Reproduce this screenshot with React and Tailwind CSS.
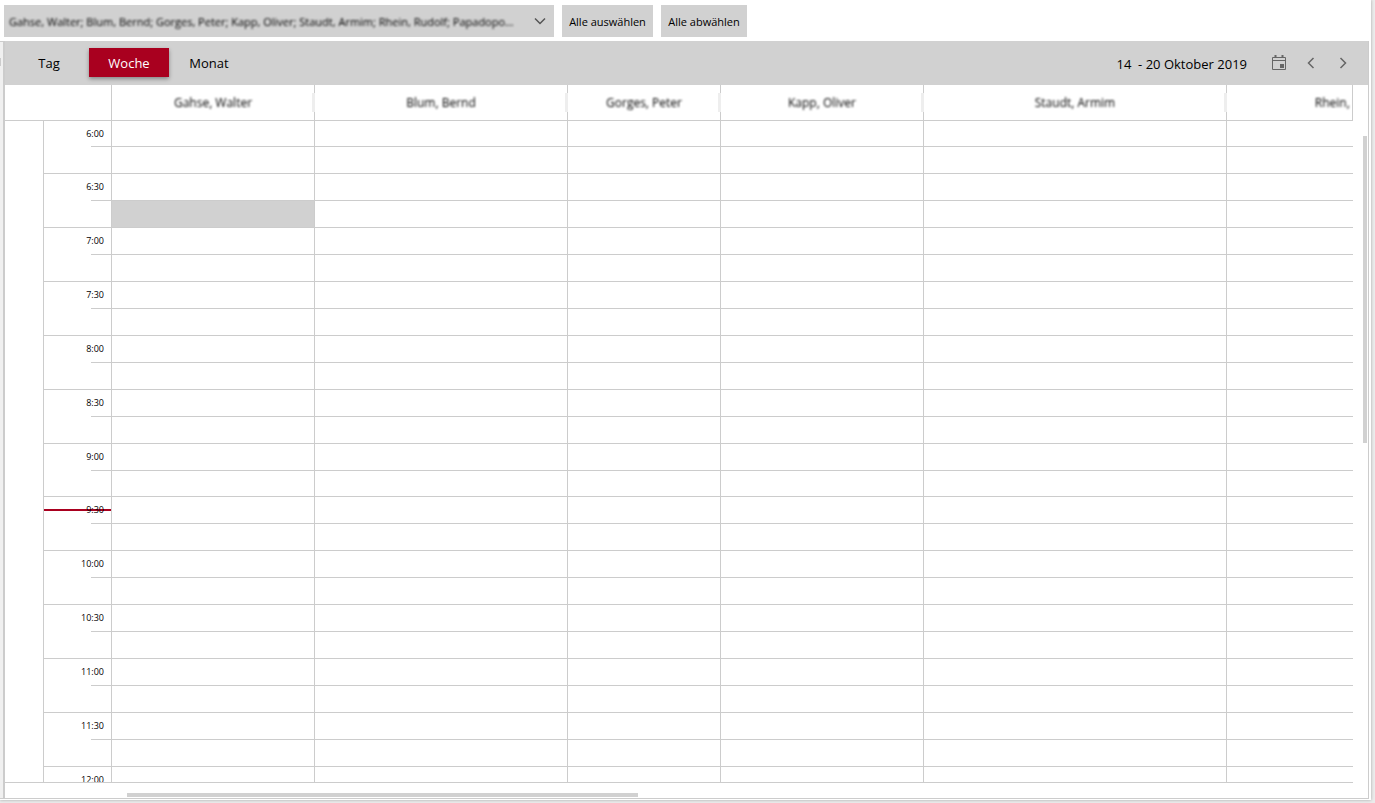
import { useState } from 'react'
import clsx from 'clsx'

const RESOURCES = ['Gahse, Walter', 'Blum, Bernd', 'Gorges, Peter', 'Kapp, Oliver', 'Staudt, Armim', 'Rhein, Rudolf']
const SELECTION = 'Gahse, Walter; Blum, Bernd; Gorges, Peter; Kapp, Oliver; Staudt, Armim; Rhein, Rudolf; Papadopoulos, Nikos'
const VIEWS = ['Tag', 'Woche', 'Monat']

// quarter-hour slots, labelled on every half hour
const SLOTS = [
  '6:00', '', '6:30', '', '7:00', '', '7:30', '', '8:00', '', '8:30', '', '9:00', '',
  '9:30', '', '10:00', '', '10:30', '', '11:00', '', '11:30', '', '12:00',
]
const NOW_SLOT = 14

// slots are slightly under 27px high, so every 13th one is a pixel shorter
const slotHeight = (row) => (row % 13 === 0 ? 'h-[26px]' : 'h-[27px]')

const Chevron = ({ d, className }) => (
  <svg viewBox="0 0 12 12" className={className} fill="none" stroke="currentColor" strokeWidth="1.5">
    <path d={d} />
  </svg>
)

const CalendarIcon = () => (
  <svg viewBox="0 0 16 16" className="h-4 w-4" fill="none" stroke="currentColor">
    <path d="M1.5 2.5h13v12h-13zM1.5 5.5h13" />
    <path d="M4.5 0v3M11.5 0v3" strokeWidth="2" />
    <path d="M9 9h4v4H9z" fill="currentColor" stroke="none" />
  </svg>
)

const FilterBar = () => (
  <div className="flex gap-2 px-1 pt-[5px] pb-1 text-[11px] text-black">
    <div className="relative h-8 w-[550px] bg-[#d1d1d1]">
      <select
        aria-label="Mitarbeiter"
        className="h-full w-full appearance-none overflow-hidden pt-0.5 pr-9 pl-[5px] text-ellipsis whitespace-nowrap blur-[1px] outline-none"
      >
        <option>{SELECTION}</option>
      </select>
      <Chevron d="M1 3.5l5 5 5-5" className="pointer-events-none absolute top-2.5 right-2 h-3 w-3 text-[#555]" />
    </div>
    <button className="h-8 w-[91px] bg-[#d1d1d1] pt-0.5 whitespace-nowrap">Alle auswählen</button>
    <button className="h-8 w-[86px] bg-[#d1d1d1] pt-0.5 whitespace-nowrap">Alle abwählen</button>
  </div>
)

const Toolbar = ({ view, onView }) => (
  <div className="flex h-11 shrink-0 items-center justify-between bg-[#d1d1d1] pr-[19px] pb-px pl-1 text-[13px] text-black">
    <div className="flex">
      {VIEWS.map(v => (
        <button
          key={v}
          onClick={() => onView(v)}
          className={clsx('h-[29px] w-20 pt-0.5', v === view && 'bg-[#a9001f] text-white shadow-[0_2px_4px_rgba(0,0,0,0.35)]')}
        >
          {v}
        </button>
      ))}
    </div>
    <div className="flex items-center text-[#666]">
      <span className="mr-6 pt-1 whitespace-pre text-black">14  - 20 Oktober 2019</span>
      <button aria-label="Kalender"><CalendarIcon /></button>
      <button aria-label="Zurück" className="ml-[18px]"><Chevron d="M8.5 1l-5 5 5 5" className="h-3 w-3" /></button>
      <button aria-label="Weiter" className="ml-5"><Chevron d="M3.5 1l5 5-5 5" className="h-3 w-3" /></button>
    </div>
  </div>
)

const Scheduler = () => (
  <table className="w-full table-fixed border-separate border-spacing-0">
    <colgroup>
      <col className="w-[39px]" />
      <col className="w-[68px]" />
      <col className="w-[203px]" />
      <col className="w-[253px]" />
      <col className="w-[153px]" />
      <col className="w-[203px]" />
      <col className="w-[303px]" />
      <col />
    </colgroup>
    <thead>
      <tr className="h-9">
        <td colSpan={2} className="border-r border-b border-[#ccc] p-0" />
        {RESOURCES.map((name, i) => {
          const last = i === RESOURCES.length - 1
          return (
            <th key={name} scope="col" className="relative border-r border-b border-[#ccc] p-0 text-[12px] font-normal text-black">
              <div className="overflow-hidden">
                <div className={clsx('whitespace-nowrap blur-[1px]', last && 'w-[250px]')}>{name}</div>
              </div>
              {!last && <span className="absolute top-2 -right-px h-[19px] w-[3px] bg-[#eee]" />}
            </th>
          )
        })}
      </tr>
    </thead>
    <tbody>
      {SLOTS.map((label, row) => (
        <tr key={row} className={slotHeight(row)}>
          {row === 0 && <td rowSpan={SLOTS.length} className="border-r border-[#ccc] p-0" />}
          <th
            scope="row"
            className={clsx('relative border-r border-[#ccc] p-0 text-[9px] font-normal text-black', !label && 'border-b')}
          >
            {row === NOW_SLOT && <div className="absolute inset-x-0 top-3 h-0.5 bg-[#a9001f]" />}
            {label && (
              <div
                className={clsx(
                  'relative ml-auto flex w-5 items-center justify-end border-b border-[#ccc] pr-[7px] whitespace-nowrap',
                  slotHeight(row),
                )}
              >
                {label}
              </div>
            )}
          </th>
          {RESOURCES.map((name, col) => (
            <td
              key={name}
              className={clsx(
                'border-b border-[#ccc] p-0',
                col < RESOURCES.length - 1 && 'border-r',
                row === 3 && col === 0 && 'bg-[#d1d1d1]',
              )}
            />
          ))}
        </tr>
      ))}
    </tbody>
  </table>
)

export default function App() {
  const [view, setView] = useState('Woche')

  return (
    <div className="h-screen overflow-hidden bg-[#ebebeb] pr-1 pb-[3px] font-['Open_Sans','Noto_Sans',sans-serif]">
      <div className="flex h-full flex-col bg-white shadow-[0_0_3px_rgba(0,0,0,0.3)]">
        <FilterBar />
        <div className="flex min-h-0 flex-1 pr-0.5 pb-px">
          <div className="w-[3px] border-y border-[#ccc] bg-[#f0f0f0] pt-4">
            <div className="h-2 w-px bg-[#ccc]" />
          </div>
          <div className="flex min-w-0 flex-1 flex-col border-r border-b border-l-2 border-[#ccc]">
            <Toolbar view={view} onView={setView} />
            <div className="flex min-h-0 flex-1">
              <div className="min-w-0 flex-1 overflow-hidden border-b border-[#ccc]">
                <Scheduler />
              </div>
              <div className="w-[15px] pt-[51px] pr-px">
                <div className="ml-auto h-[307px] w-1 bg-[#d1d1d1]" />
              </div>
            </div>
            <div className="h-[15px] shrink-0 pt-2.5">
              <div className="ml-[122px] h-1 w-3/8 bg-[#d1d1d1]" />
            </div>
          </div>
        </div>
      </div>
    </div>
  )
}
